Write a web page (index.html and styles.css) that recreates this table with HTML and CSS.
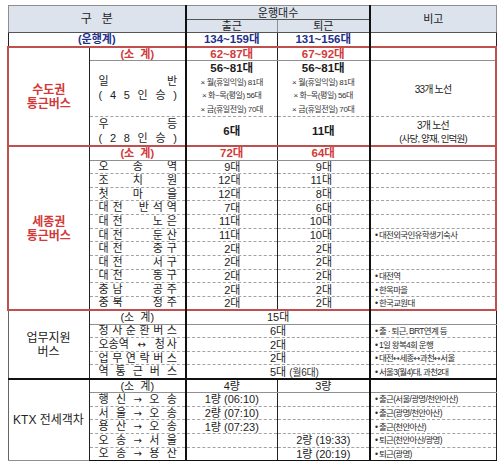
FILE: index.html
```html
<!DOCTYPE html>
<html lang="ko">
<head>
<meta charset="utf-8">
<title>통근버스 운행 현황</title>
<link rel="stylesheet" href="styles.css">
</head>
<body>
<table class="sheet">
  <colgroup>
    <col class="w1"><col class="w2"><col class="w3"><col class="w4"><col class="w5">
  </colgroup>
  <thead>
    <tr class="hr1">
      <th colspan="2" rowspan="2" class="gubun c2">구&nbsp;&nbsp;&nbsp;분</th>
      <th colspan="2" class="c4">운행대수</th>
      <th rowspan="2">비고</th>
    </tr>
    <tr class="hr2"><th>출근</th><th class="c4">퇴근</th></tr>
  </thead>
  <tbody>
    <tr class="grand">
      <td colspan="2" class="navy c2">(운행계)</td>
      <td class="navy num-b">134~159대</td>
      <td class="navy num-b c4">131~156대</td>
      <td></td>
    </tr>

    <tr class="subtotal red-top">
      <td rowspan="3" class="cat red-cat"><div class="catl">수도권</div><div class="catl">통근버스</div></td>
      <td class="red c2">(소&nbsp;&nbsp;계)</td>
      <td class="red num-b">62~87대</td>
      <td class="red num-b c4">67~92대</td>
      <td class="rr"></td>
    </tr>
    <tr class="ilban">
      <td class="name c2">
        <div class="dist line"><span>일</span><span>반</span></div>
        <div class="dist line"><span>(</span><span>4</span><span>5</span><span>인</span><span>승</span><span>)</span></div>
      </td>
      <td class="multi">
        <div class="big">56~81대</div>
        <div class="sm">× 월(휴일익일) 81대</div>
        <div class="sm">× 화~목(평일) 56대</div>
        <div class="sm">× 금(휴일전일) 70대</div>
      </td>
      <td class="multi c4">
        <div class="big">56~81대</div>
        <div class="sm">× 월(휴일익일) 81대</div>
        <div class="sm">× 화~목(평일) 56대</div>
        <div class="sm">× 금(휴일전일) 70대</div>
      </td>
      <td class="rr route">33개 노선</td>
    </tr>
    <tr class="udeung">
      <td class="name c2">
        <div class="dist line"><span>우</span><span>등</span></div>
        <div class="dist line"><span>(</span><span>2</span><span>8</span><span>인</span><span>승</span><span>)</span></div>
      </td>
      <td class="num-b">6대</td>
      <td class="num-b c4">11대</td>
      <td class="rr route">
        <div class="rl">3개 노선</div>
        <div class="rl route-sm">(사당, 양재, 인덕원)</div>
      </td>
    </tr>

    <tr class="subtotal red-top">
      <td rowspan="12" class="cat red-cat"><div class="catl">세종권</div><div class="catl">통근버스</div></td>
      <td class="red c2">(소&nbsp;&nbsp;계)</td>
      <td class="red num-b">72대</td>
      <td class="red num-b c4">64대</td>
      <td class="rr"></td>
    </tr>
    <tr>
      <td class="name c2"><div class="dist"><span>오</span><span>송</span><span>역</span></div></td>
      <td class="rt3">9대</td><td class="rt4 c4">9대</td><td class="rr"></td>
    </tr>
    <tr>
      <td class="name c2"><div class="dist"><span>조</span><span>치</span><span>원</span></div></td>
      <td class="rt3">12대</td><td class="rt4 c4">11대</td><td class="rr"></td>
    </tr>
    <tr>
      <td class="name c2"><div class="dist"><span>첫</span><span>마</span><span>을</span></div></td>
      <td class="rt3">12대</td><td class="rt4 c4">8대</td><td class="rr"></td>
    </tr>
    <tr>
      <td class="name c2"><div class="dist"><span class="g">대전</span><span class="g">반석역</span></div></td>
      <td class="rt3">7대</td><td class="rt4 c4">6대</td><td class="rr"></td>
    </tr>
    <tr>
      <td class="name c2"><div class="dist"><span class="g">대전</span><span class="g">노은</span></div></td>
      <td class="rt3">11대</td><td class="rt4 c4">10대</td><td class="rr"></td>
    </tr>
    <tr>
      <td class="name c2"><div class="dist"><span class="g">대전</span><span class="g">둔산</span></div></td>
      <td class="rt3">11대</td><td class="rt4 c4">10대</td><td class="rr note">• 대전외국인유학생기숙사</td>
    </tr>
    <tr>
      <td class="name c2"><div class="dist"><span class="g">대전</span><span class="g">중구</span></div></td>
      <td class="rt3">2대</td><td class="rt4 c4">2대</td><td class="rr"></td>
    </tr>
    <tr>
      <td class="name c2"><div class="dist"><span class="g">대전</span><span class="g">서구</span></div></td>
      <td class="rt3">2대</td><td class="rt4 c4">2대</td><td class="rr"></td>
    </tr>
    <tr>
      <td class="name c2"><div class="dist"><span class="g">대전</span><span class="g">동구</span></div></td>
      <td class="rt3">2대</td><td class="rt4 c4">2대</td><td class="rr note">• 대전역</td>
    </tr>
    <tr>
      <td class="name c2"><div class="dist"><span class="g">충남</span><span class="g">공주</span></div></td>
      <td class="rt3">2대</td><td class="rt4 c4">2대</td><td class="rr note">• 한옥마을</td>
    </tr>
    <tr>
      <td class="name c2"><div class="dist"><span class="g">충북</span><span class="g">청주</span></div></td>
      <td class="rt3">2대</td><td class="rt4 c4">2대</td><td class="rr note">• 한국교원대</td>
    </tr>

    <tr class="subtotal red-top">
      <td rowspan="5" class="cat"><div class="catl">업무지원</div><div class="catl">버스</div></td>
      <td class="c2">(소&nbsp;&nbsp;계)</td>
      <td colspan="2" class="merged first c4">15대</td>
      <td></td>
    </tr>
    <tr>
      <td class="name c2"><div class="dist"><span>청</span><span>사</span><span>순</span><span>환</span><span>버</span><span>스</span></div></td>
      <td colspan="2" class="merged c4">6대</td>
      <td class="note">• 출 · 퇴근, BRT연계 등</td>
    </tr>
    <tr>
      <td class="name c2"><div class="dist"><span class="g0">오송역</span><span class="ar">↔</span><span class="g1">청사</span></div></td>
      <td colspan="2" class="merged c4">2대</td>
      <td class="note">• 1일 왕복4회 운행</td>
    </tr>
    <tr>
      <td class="name c2"><div class="dist"><span>업</span><span>무</span><span>연</span><span>락</span><span>버</span><span>스</span></div></td>
      <td colspan="2" class="merged c4">2대</td>
      <td class="note">• 대전<span class="ar-s">↔</span>세종<span class="ar-s">↔</span>과천<span class="ar-s">↔</span>서울</td>
    </tr>
    <tr>
      <td class="name c2"><div class="dist"><span>역</span><span>통</span><span>근</span><span>버</span><span>스</span></div></td>
      <td colspan="2" class="merged c4">5대 <span class="paren">(월6대)</span></td>
      <td class="note">• 서울3(월4)대, 과천2대</td>
    </tr>

    <tr class="subtotal black-top">
      <td rowspan="6" class="cat">KTX 전세객차</td>
      <td class="c2">(소&nbsp;&nbsp;계)</td>
      <td>4량</td>
      <td class="c4">3량</td>
      <td></td>
    </tr>
    <tr>
      <td class="name c2"><div class="dist"><span>행</span><span>신</span><span class="ar">→</span><span>오</span><span>송</span></div></td>
      <td>1량 (06:10)</td><td class="c4"></td><td class="note">• 출근(서울/광명/천안아산)</td>
    </tr>
    <tr>
      <td class="name c2"><div class="dist"><span>서</span><span>울</span><span class="ar">→</span><span>오</span><span>송</span></div></td>
      <td>2량 (07:10)</td><td class="c4"></td><td class="note">• 출근(광명/천안아산)</td>
    </tr>
    <tr>
      <td class="name c2"><div class="dist"><span>용</span><span>산</span><span class="ar">→</span><span>오</span><span>송</span></div></td>
      <td>1량 (07:23)</td><td class="c4"></td><td class="note">• 출근(천안아산)</td>
    </tr>
    <tr>
      <td class="name c2"><div class="dist"><span>오</span><span>송</span><span class="ar">→</span><span>서</span><span>울</span></div></td>
      <td></td><td class="c4">2량 (19:33)</td><td class="note">• 퇴근(천안아산/광명)</td>
    </tr>
    <tr class="last">
      <td class="name c2"><div class="dist"><span>오</span><span>송</span><span class="ar">→</span><span>용</span><span>산</span></div></td>
      <td></td><td class="c4">1량 (20:19)</td><td class="note">• 퇴근(광명)</td>
    </tr>
  </tbody>
</table>
</body>
</html>
```

FILE: styles.css
```css
* { box-sizing: border-box; }
html, body { margin: 0; background: #fff; }
body {
  padding: 5px 0 0 7px;
  font-family: "Liberation Sans", "Noto Sans CJK KR", sans-serif;
  font-size: 11px;
  color: #1c1c1c;
}
.sheet {
  border-collapse: collapse;
  table-layout: fixed;
  width: 488px;
}
.w1 { width: 81px; }
.w2 { width: 97px; }
.w3 { width: 91px; }
.w4 { width: 93px; }
.w5 { width: 126px; }

th, td {
  padding: 1px 0 0;
  text-align: center;
  vertical-align: middle;
  line-height: 9px;
  white-space: nowrap;
  overflow: hidden;
  font-weight: normal;
}
tr { height: 13.65px; }
td {
  border-top: 1px dashed #a3a3a3;
  border-bottom: 1px dashed #a3a3a3;
  border-left: 1px solid #222;
  border-right: 1px solid #222;
}
th {
  background: #dce3ec;
  border: 1px solid #8e8e8e;
  color: #222;
}
.hr1 { height: 14px; }
.hr2 { height: 13px; }
.gubun { font-size: 12px; }
.hr1 th, .hr2 th { border-bottom: 1px solid #555; }

.c2 { border-right: 2px solid #111; }
.c4 { border-right: 2px solid #111; }

.grand { height: 14px; }
.grand td { border-top: 1px solid #333; }
.navy { color: #1e2f8c; font-weight: bold; }
.num-b { font-weight: bold; font-size: 11.5px; }

.red { color: #d23a3a; font-weight: bold; }
.subtotal { height: 14px; }
.subtotal td { border-bottom: 1px solid #909090; }
.red-top td { border-top: 2px solid #c0504d; }
.black-top td { border-top: 2px solid #111; }
.last td { border-bottom: 2px solid #111; }

.cat {
  font-size: 12px;
  color: #222;
  border-left: 1px solid #666;
}
.catl { height: 14px; line-height: 14px; }
.red-cat {
  color: #d23a3a;
  font-weight: bold;
  border-left: 2px solid #c0504d;
}
.rr { border-right: 2px solid #c0504d; }

.name { padding: 0 8px 0 9px; }
.dist {
  display: flex;
  justify-content: space-between;
  align-items: center;
  height: 12px;
}
.dist .g { letter-spacing: 4px; margin-right: -4px; }
.dist .g1 { letter-spacing: 2px; margin-right: -2px; }
.dist.line { height: 14px; }
.ar { font-family: "DejaVu Sans", sans-serif; font-size: 10px; }
.ar-s { font-family: "DejaVu Sans", sans-serif; font-size: 8px; letter-spacing: -0.5px; }

.ilban { height: 55px; }
.udeung { height: 28px; }
.multi div { height: 13.5px; line-height: 13.5px; }
.multi .big { font-weight: bold; font-size: 11.5px; }
.multi .sm { font-size: 8px; letter-spacing: -0.4px; color: #333; }

.route { font-size: 10px; letter-spacing: -0.8px; color: #222; }
.route .rl { height: 13px; line-height: 13px; }
.route .route-sm { font-size: 9.5px; letter-spacing: -0.8px; }

.rt3 { text-align: right; padding-right: 36px; }
.rt4 { text-align: right; padding-right: 37px; }

.merged { text-align: left; padding-left: 83px; }
.merged.first { padding-left: 80px; }
.paren { font-size: 10px; letter-spacing: -0.3px; color: #333; }

.note {
  text-align: left;
  padding-left: 4px;
  font-size: 8.5px;
  letter-spacing: -0.7px;
  color: #2a2a2a;
}
```
